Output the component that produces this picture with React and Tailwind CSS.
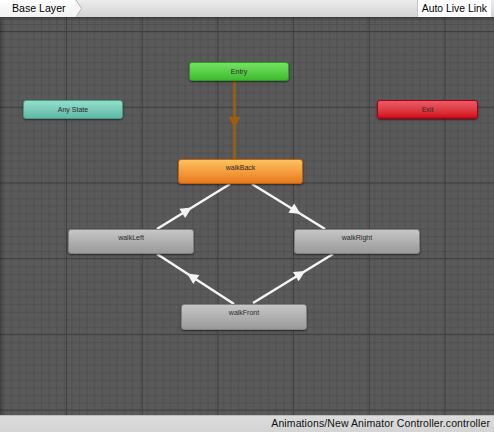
const font = { fontFamily: '"Liberation Sans", Arial, sans-serif' };

const NODES = [
  { label: 'Entry', x: 189, y: 45, w: 100, h: 19, small: true, cls: 'bg-gradient-to-b from-[#74e262] to-[#3cbc2c] border-[#2f9a22]' },
  { label: 'Any State', x: 23, y: 83, w: 100, h: 19, small: true, cls: 'bg-gradient-to-b from-[#93decb] to-[#5fb9a6] border-[#4a9a88]' },
  { label: 'Exit', x: 377, y: 83, w: 101, h: 19, small: true, cls: 'bg-gradient-to-b from-[#ea5a66] to-[#d20016] border-[#a80012]' },
  { label: 'walkBack', x: 178, y: 142, w: 125, h: 25, cls: 'bg-gradient-to-b from-[#fdc25c] to-[#e8781c] border-[#c06012]' },
  { label: 'walkLeft', x: 68, y: 212, w: 126, h: 25, cls: 'bg-gradient-to-b from-[#c6c6c6] to-[#9a9a9a] border-[#808080]' },
  { label: 'walkRight', x: 294, y: 212, w: 126, h: 25, cls: 'bg-gradient-to-b from-[#c6c6c6] to-[#9a9a9a] border-[#808080]' },
  { label: 'walkFront', x: 181, y: 287, w: 126, h: 26, cls: 'bg-gradient-to-b from-[#c6c6c6] to-[#9a9a9a] border-[#808080]' },
];

// transitions in page coordinates: line ends, arrow centre
const LINKS = [
  { a: [157, 229], b: [230, 184], c: [187, 210.5] },
  { a: [252, 184], b: [325, 229], c: [296, 211] },
  { a: [234, 304], b: [157, 254], c: [191.7, 276.5] },
  { a: [253, 303], b: [333, 254], c: [300.5, 273.8] },
];

function arrowHead(a, b, c, len = 11, half = 5.5) {
  const dx = b[0] - a[0];
  const dy = b[1] - a[1];
  const l = Math.hypot(dx, dy);
  const ux = dx / l;
  const uy = dy / l;
  const tip = [c[0] + ux * len / 2, c[1] + uy * len / 2];
  const base = [c[0] - ux * len / 2, c[1] - uy * len / 2];
  const p1 = [base[0] - uy * half, base[1] + ux * half];
  const p2 = [base[0] + uy * half, base[1] - ux * half];
  return [tip, p1, p2].map((p) => p.join(',')).join(' ');
}

function Node({ n }) {
  return (
    <div
      className={`absolute flex justify-center rounded-[3px] border shadow-[0_1px_2px_rgba(0,0,0,0.55)] ${n.cls} ${n.small ? 'items-center' : 'items-start pt-[4px]'}`}
      style={{ left: n.x, top: n.y, width: n.w, height: n.h }}
    >
      <span className="text-[7px] leading-[8px] text-[#2a2a2a]" style={font}>{n.label}</span>
    </div>
  );
}

function Graph() {
  return (
    <svg className="absolute inset-0" width="494" height="398" viewBox="0 17 494 398">
      <defs>
        <pattern id="minor" x="66" y="31" width="7.57" height="7.57" patternUnits="userSpaceOnUse">
          <path d="M0.5 0V7.57M0 0.5H7.57" stroke="#505050" strokeWidth="1" />
        </pattern>
        <pattern id="major" x="66" y="31" width="75.7" height="75.7" patternUnits="userSpaceOnUse">
          <rect width="75.7" height="75.7" fill="url(#minor)" />
          <path d="M0.5 0V75.7M0 0.5H75.7" stroke="#3e3e3e" strokeWidth="1" />
        </pattern>
      </defs>
      <rect x="0" y="17" width="494" height="398" fill="#5a5a5a" />
      <rect x="0" y="17" width="494" height="398" fill="url(#major)" />

      {/* entry transition */}
      <line x1="234.5" y1="80" x2="234.5" y2="160" stroke="#9c600c" strokeWidth="2.5" />
      <polygon points="234.5,128 229,117 240,117" fill="#9c600c" />

      {LINKS.map((k, i) => (
        <g key={i}>
          <line x1={k.a[0]} y1={k.a[1]} x2={k.b[0]} y2={k.b[1]} stroke="#f4f4f4" strokeWidth="2.5" />
          <polygon points={arrowHead(k.a, k.b, k.c)} fill="#f4f4f4" />
        </g>
      ))}
    </svg>
  );
}

export default function App() {
  return (
    <div className="flex h-[432px] w-[494px] flex-col overflow-hidden bg-[#5a5a5a]" style={font}>
      <div className="flex h-[17px] shrink-0 items-stretch justify-between bg-gradient-to-b from-[#ececec] to-[#d3d3d3]">
        <div className="flex items-stretch">
          <div className="flex items-center bg-gradient-to-b from-white to-[#f1f1f1] pl-[12px] pr-[10px] text-[10.6px] text-black">
            Base Layer
          </div>
          <svg width="7" height="17" viewBox="0 0 7 17" className="-ml-px">
            <polygon points="0,0 1,0 6.5,8.5 1,17 0,17" fill="#f4f4f4" />
            <polyline points="1,0 6.5,8.5 1,17" fill="none" stroke="#b4b4b4" strokeWidth="1" />
          </svg>
        </div>
        <div className="mr-[3px] flex items-center border-l border-[#c4c4c4] bg-white px-[4px] text-[10.4px] text-black">
          Auto Live Link
        </div>
      </div>

      <div className="relative flex-1 shadow-[inset_2px_2px_3px_rgba(0,0,0,0.3)]">
        <Graph />
        {NODES.map((n) => (
          <Node key={n.label} n={n} />
        ))}
        <div className="pointer-events-none absolute inset-0 shadow-[inset_2px_2px_3px_rgba(0,0,0,0.3)]" />
      </div>

      <div className="flex h-[17px] shrink-0 items-center justify-end border-t border-[#bdbdbd] bg-gradient-to-b from-[#dcdcdc] to-[#d4d4d4] pr-[4px] text-[10.5px] tracking-[0.1px] text-[#111]">
        Animations/New Animator Controller.controller
      </div>
    </div>
  );
}
